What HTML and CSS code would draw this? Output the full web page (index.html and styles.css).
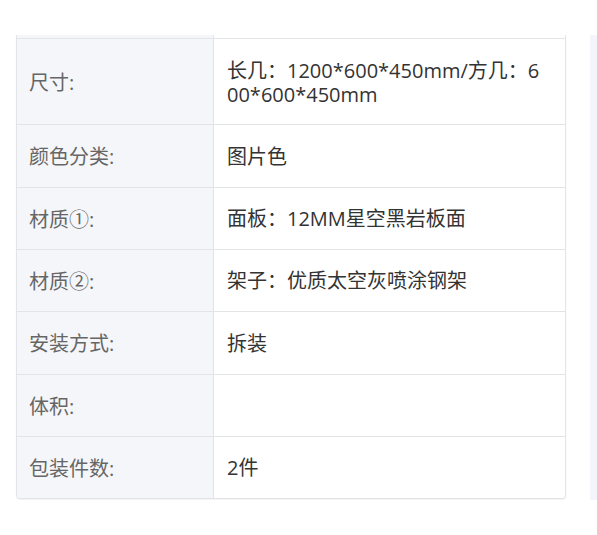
FILE: index.html
```html
<!DOCTYPE html>
<html lang="zh">
<head>
<meta charset="utf-8">
<link rel="stylesheet" href="styles.css">
</head>
<body>
<div class="page">
  <div class="spec">
    <div class="row row-cut"><div class="k"></div><div class="v"></div></div>
    <div class="row"><div class="k">尺寸:</div><div class="v">长几：1200*600*450mm/方几：600*600*450mm</div></div>
    <div class="row"><div class="k">颜色分类:</div><div class="v">图片色</div></div>
    <div class="row"><div class="k">材质①:</div><div class="v">面板：12MM星空黑岩板面</div></div>
    <div class="row"><div class="k">材质②:</div><div class="v">架子：优质太空灰喷涂钢架</div></div>
    <div class="row"><div class="k">安装方式:</div><div class="v">拆装</div></div>
    <div class="row"><div class="k">体积:</div><div class="v"></div></div>
    <div class="row"><div class="k">包装件数:</div><div class="v">2件</div></div>
  </div>
  <div class="side"></div>
</div>
</body>
</html>
```
FILE: styles.css
```css
html, body {
  margin: 0;
  padding: 0;
  background: #fff;
  overflow: hidden;
}
body {
  font-family: "Open Sans", "Noto Sans CJK SC", sans-serif;
  font-size: 20px;
}
.page {
  display: flex;
  align-items: flex-start;
  padding: 35px 0 0 16px;
  gap: 24px;
}
.spec {
  width: 550px;
  flex: none;
  border: 1px solid #e3e4e8;
  border-top: none;
  border-radius: 0 0 4px 4px;
  overflow: hidden;
  box-sizing: border-box;
  box-shadow: 0 1px 2px rgba(0,0,0,0.06);
}
.row {
  display: grid;
  grid-template-columns: 197px 1fr;
  border-top: 1px solid #e3e4e8;
}
.row-cut {
  border-top: none;
  height: 3px;
}
.k {
  display: flex;
  align-items: center;
  background: #f5f6fa;
  border-right: 1px solid #e3e4e8;
  color: #666;
  padding: 20px 12px 17.33px;
  line-height: 24px;
}
.v {
  color: #333;
  padding: 19.5px 21px 17.83px 13px;
  line-height: 24px;
  word-break: break-all;
}
.row-cut .k, .row-cut .v {
  padding: 0;
}
.side {
  flex: none;
  width: 20px;
  height: 465px;
  background: #f4f5fa;
}
```
